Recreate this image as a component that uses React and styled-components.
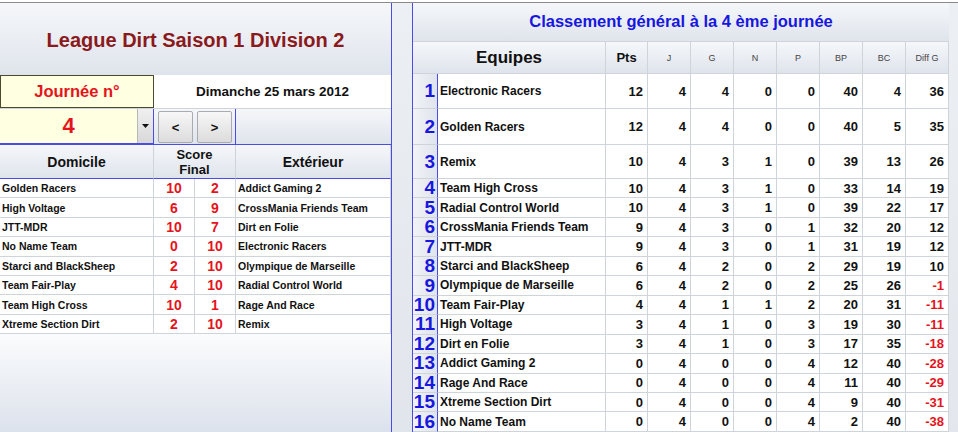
import React from "react"
import styled, { createGlobalStyle } from "styled-components"

const GlobalStyle = createGlobalStyle`
  html, body {
    margin: 0;
    padding: 0;
    background: #ffffff;
    font-family: "Liberation Sans", Arial, sans-serif;
  }
  * { box-sizing: border-box; }
`;

const matches = [
    ["Golden Racers", 10, 2, "Addict Gaming 2"],
    ["High Voltage", 6, 9, "CrossMania Friends Team"],
    ["JTT-MDR", 10, 7, "Dirt en Folie"],
    ["No Name Team", 0, 10, "Electronic Racers"],
    ["Starci and BlackSheep", 2, 10, "Olympique de Marseille"],
    ["Team Fair-Play", 4, 10, "Radial Control World"],
    ["Team High Cross", 10, 1, "Rage And Race"],
    ["Xtreme Section Dirt", 2, 10, "Remix"],
];

const standings = [
    ["Electronic Racers", 12, 4, 4, 0, 0, 40, 4, 36],
    ["Golden Racers", 12, 4, 4, 0, 0, 40, 5, 35],
    ["Remix", 10, 4, 3, 1, 0, 39, 13, 26],
    ["Team High Cross", 10, 4, 3, 1, 0, 33, 14, 19],
    ["Radial Control World", 10, 4, 3, 1, 0, 39, 22, 17],
    ["CrossMania Friends Team", 9, 4, 3, 0, 1, 32, 20, 12],
    ["JTT-MDR", 9, 4, 3, 0, 1, 31, 19, 12],
    ["Starci and BlackSheep", 6, 4, 2, 0, 2, 29, 19, 10],
    ["Olympique de Marseille", 6, 4, 2, 0, 2, 25, 26, -1],
    ["Team Fair-Play", 4, 4, 1, 1, 2, 20, 31, -11],
    ["High Voltage", 3, 4, 1, 0, 3, 19, 30, -11],
    ["Dirt en Folie", 3, 4, 1, 0, 3, 17, 35, -18],
    ["Addict Gaming 2", 0, 4, 0, 0, 4, 12, 40, -28],
    ["Rage And Race", 0, 4, 0, 0, 4, 11, 40, -29],
    ["Xtreme Section Dirt", 0, 4, 0, 0, 4, 9, 40, -31],
    ["No Name Team", 0, 4, 0, 0, 4, 2, 40, -38],
];

const statCols = ["J", "G", "N", "P", "BP", "BC", "Diff G"];

const BLUE_LINE = "#4b4be6";
const GRID = "#cfd3da";
const RED = "#e5141c";
const HEAD_BG = "linear-gradient(#f5f7fa, #dfe4ec)";

export default function App() {
    return (
        <>
            <GlobalStyle />
            <Sheet>
                <LeftPanel>
                    <LeagueTitle>League Dirt Saison 1 Division 2</LeagueTitle>
                    <DayRow>
                        <DayLabel>Journée n°</DayLabel>
                        <DateCell>Dimanche 25 mars 2012</DateCell>
                    </DayRow>
                    <PickerRow>
                        <DaySelect>
                            <DayValue>4</DayValue>
                            <DropButton>
                                <svg width="7" height="4" viewBox="0 0 7 4">
                                    <path d="M0 0h7L3.5 4z" fill="#111" />
                                </svg>
                            </DropButton>
                        </DaySelect>
                        <NavBox>
                            <NavButton>&lt;</NavButton>
                            <NavButton>&gt;</NavButton>
                        </NavBox>
                    </PickerRow>
                    <MatchGrid>
                        <MatchHead>Domicile</MatchHead>
                        <MatchHead $span={2} $small>Score<br />Final</MatchHead>
                        <MatchHead>Extérieur</MatchHead>
                        {matches.map(([home, s1, s2, away]) => (
                            <React.Fragment key={home}>
                                <TeamCell>{home}</TeamCell>
                                <ScoreCell>{s1}</ScoreCell>
                                <ScoreCell>{s2}</ScoreCell>
                                <TeamCell>{away}</TeamCell>
                            </React.Fragment>
                        ))}
                    </MatchGrid>
                    <LeftFill />
                </LeftPanel>

                <Gutter />

                <RightPanel>
                    <RankTitle>Classement général à la 4 ème journée</RankTitle>
                    <HeadCell $span={2} $big>Equipes</HeadCell>
                    <HeadCell $mid>Pts</HeadCell>
                    {statCols.map((c) => (
                        <HeadCell key={c}>{c}</HeadCell>
                    ))}
                    {standings.map(([team, ...nums], i) => (
                        <React.Fragment key={team}>
                            <RankCell>{i + 1}</RankCell>
                            <NameCell>{team}</NameCell>
                            {nums.map((n, j) => (
                                <NumCell key={j} $neg={n < 0}>{n}</NumCell>
                            ))}
                        </React.Fragment>
                    ))}
                </RightPanel>

                <RightFill />
            </Sheet>
        </>
    )
};

const Sheet = styled.div`
    margin-top: 2px;
    border-top: 1px solid #8a8a8a;
    width: 958px;
    height: 430px;
    display: flex;
    overflow: hidden;
    background: #eef0f4;
`;

const LeftPanel = styled.div`
    width: 392px;
    flex-shrink: 0;
    display: flex;
    flex-direction: column;
    border-right: 1px solid ${BLUE_LINE};
    background: #fff;
`;

const LeagueTitle = styled.div`
    height: 72px;
    display: flex;
    align-items: center;
    justify-content: center;
    padding-top: 3px;
    background: ${HEAD_BG};
    color: #8a1a1c;
    font-size: 20px;
    font-weight: bold;
`;

const DayRow = styled.div`
    height: 34px;
    display: grid;
    grid-template-columns: 154px 1fr;
    border-bottom: 1px solid ${GRID};
`;

const DayLabel = styled.div`
    display: flex;
    align-items: center;
    justify-content: center;
    background: #ffffe2;
    border: 1px solid #4a4a30;
    color: ${RED};
    font-size: 16.5px;
    font-weight: bold;
`;

const DateCell = styled.div`
    display: flex;
    align-items: center;
    justify-content: center;
    font-size: 13.5px;
    font-weight: bold;
    color: #111;
`;

const PickerRow = styled.div`
    height: 36px;
    display: flex;
    background: ${HEAD_BG};
    border-bottom: 1px solid ${BLUE_LINE};
`;

const DaySelect = styled.div`
    width: 153px;
    display: flex;
    background: #ffffe2;
    border-bottom: 1px solid ${BLUE_LINE};
`;

const DayValue = styled.div`
    flex: 1;
    display: flex;
    align-items: center;
    justify-content: center;
    color: ${RED};
    font-size: 22px;
    font-weight: bold;
`;

const DropButton = styled.div`
    width: 16px;
    display: flex;
    align-items: center;
    justify-content: center;
    background: linear-gradient(#f0f0f0, #d8d8d8);
    border-left: 1px solid #b8b8b8;
`;

const NavBox = styled.div`
    width: 83px;
    display: flex;
    gap: 4px;
    padding: 2px 3px 1px 4px;
    border-left: 1px solid ${BLUE_LINE};
    border-right: 1px solid ${BLUE_LINE};
`;

const NavButton = styled.div`
    flex: 1;
    display: flex;
    align-items: center;
    justify-content: center;
    border: 1px solid #a9abb0;
    border-radius: 2px;
    background: linear-gradient(#f7f7f7, #dcdcdc);
    font-size: 13px;
    font-weight: bold;
    color: #111;
`;

const MatchGrid = styled.div`
    display: grid;
    grid-template-columns: 154px 41px 41px 1fr;
    grid-template-rows: 34px repeat(8, 19.4px);
`;

const MatchHead = styled.div`
    grid-column: span ${(p) => p.$span || 1};
    display: flex;
    align-items: center;
    justify-content: center;
    text-align: center;
    background: ${HEAD_BG};
    border-right: 1px solid ${GRID};
    border-bottom: 1px solid ${BLUE_LINE};
    font-size: ${(p) => (p.$small ? "13px" : "14px")};
    line-height: ${(p) => (p.$small ? "15px" : "normal")};
    font-weight: bold;
    color: #111;
    &:last-child { border-right: none; }
`;

const TeamCell = styled.div`
    display: flex;
    align-items: center;
    padding-left: 2px;
    border-bottom: 1px solid ${GRID};
    border-right: 1px solid ${GRID};
    font-size: 10.5px;
    font-weight: bold;
    color: #111;
    white-space: nowrap;
    overflow: hidden;
`;

const ScoreCell = styled.div`
    display: flex;
    align-items: center;
    justify-content: center;
    border-bottom: 1px solid ${GRID};
    border-right: 1px solid ${GRID};
    color: ${RED};
    font-size: 14px;
    font-weight: bold;
`;

const LeftFill = styled.div`
    flex: 1;
    background: linear-gradient(#fbfcfd, #dce2ec);
`;

const Gutter = styled.div`
    width: 21px;
    flex-shrink: 0;
    background: linear-gradient(#eceff3, #e1e5ec);
    border-right: 1px solid ${BLUE_LINE};
`;

const RightPanel = styled.div`
    width: 536px;
    flex-shrink: 0;
    display: grid;
    grid-template-columns: 25px 168px 42px repeat(7, 43px);
    grid-template-rows: 39px 32px 35px 36px 34px repeat(13, 19.46px);
    background: #fff;
`;

const RankTitle = styled.div`
    grid-column: 1 / -1;
    display: flex;
    align-items: center;
    justify-content: center;
    padding-bottom: 1px;
    background: ${HEAD_BG};
    border-bottom: 1px solid ${GRID};
    color: #1717e0;
    font-size: 16.5px;
    font-weight: bold;
`;

const HeadCell = styled.div`
    grid-column: span ${(p) => p.$span || 1};
    display: flex;
    align-items: center;
    justify-content: center;
    background: ${HEAD_BG};
    border-right: 1px solid ${GRID};
    border-bottom: 1px solid ${GRID};
    color: ${(p) => (p.$big || p.$mid ? "#111" : "#444")};
    font-size: ${(p) => (p.$big ? "17px" : p.$mid ? "13px" : "9px")};
    font-weight: ${(p) => (p.$big || p.$mid ? "bold" : "normal")};
`;

const RankCell = styled.div`
    display: flex;
    align-items: center;
    justify-content: flex-end;
    padding-right: 2px;
    background: linear-gradient(90deg, #f1f3f7, #dfe4ec);
    border-right: 1px solid ${BLUE_LINE};
    border-bottom: 1px solid ${GRID};
    color: #1717e0;
    font-size: 19px;
    font-weight: bold;
`;

const NameCell = styled.div`
    display: flex;
    align-items: center;
    padding-left: 2px;
    border-right: 1px solid ${GRID};
    border-bottom: 1px solid ${GRID};
    font-size: 12px;
    font-weight: bold;
    color: #111;
    white-space: nowrap;
`;

const NumCell = styled.div`
    display: flex;
    align-items: center;
    justify-content: flex-end;
    padding-right: 4px;
    border-right: 1px solid ${GRID};
    border-bottom: 1px solid ${GRID};
    font-size: 13px;
    font-weight: bold;
    color: ${(p) => (p.$neg ? RED : "#111")};
`;

const RightFill = styled.div`
    flex: 1;
    background: linear-gradient(#eceff3, #e3e7ed);
`;
